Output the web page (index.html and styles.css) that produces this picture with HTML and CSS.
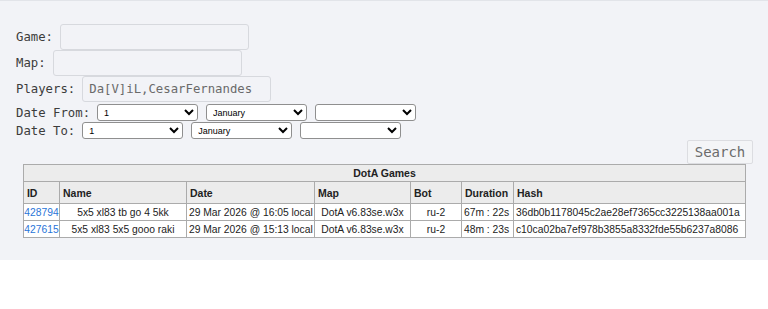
FILE: index.html
```html
<!DOCTYPE html>
<html lang="en">
<head>
  <meta charset="UTF-8">
  <meta name="viewport" content="width=device-width, initial-scale=1.0">
  <title>DotA Games</title>
  <link rel="stylesheet" href="styles.css">
</head>
<body>
  <div class="panel">
    <form class="search-form">
      <div class="field"><label for="game">Game:</label><input type="text" id="game" /></div>
      <div class="field"><label for="map">Map:</label><input type="text" id="map" /></div>
      <div class="field"><label for="players">Players:</label><input type="text" id="players" value="Da[V]iL,CesarFernandes" /></div>
      <div class="field date-row first">
        <label>Date From:</label>
        <select><option>1</option></select>
        <select><option>January</option></select>
        <select><option></option></select>
      </div>
      <div class="field date-row">
        <label>Date To:</label>
        <select><option>1</option></select>
        <select><option>January</option></select>
        <select><option></option></select>
      </div>
      <div class="actions"><button type="button">Search</button></div>
    </form>

    <table class="games">
      <colgroup>
        <col class="c-id"><col class="c-name"><col class="c-date"><col class="c-map"><col class="c-bot"><col class="c-dur"><col class="c-hash">
      </colgroup>
      <tr><th colspan="7" class="caption">DotA Games</th></tr>
      <tr class="head">
        <th>ID</th>
        <th>Name</th>
        <th>Date</th>
        <th>Map</th>
        <th>Bot</th>
        <th>Duration</th>
        <th>Hash</th>
      </tr>
      <tr>
        <td class="center"><a href="#">428794</a></td>
        <td class="center">5x5 xl83 tb go 4 5kk</td>
        <td>29 Mar 2026 @ 16:05 local</td>
        <td class="center">DotA v6.83se.w3x</td>
        <td class="center">ru-2</td>
        <td>67m : 22s</td>
        <td>36db0b1178045c2ae28ef7365cc3225138aa001a</td>
      </tr>
      <tr>
        <td class="center"><a href="#">427615</a></td>
        <td class="center">5x5 xl83 5x5 gooo raki</td>
        <td>29 Mar 2026 @ 15:13 local</td>
        <td class="center">DotA v6.83se.w3x</td>
        <td class="center">ru-2</td>
        <td>48m : 23s</td>
        <td>c10ca02ba7ef978b3855a8332fde55b6237a8086</td>
      </tr>
    </table>
  </div>
</body>
</html>
```

FILE: styles.css
```css
body { margin: 0; background: #fff; }
.panel { background: #f2f3f7; border-top: 1px solid #e2e4e9; padding: 23px 15px 22px 16px; font-family: "DejaVu Sans Mono", monospace; font-size: 12.3px; color: #3c3c3c; }
.field { display: flex; align-items: center; gap: 7px; }
.field input { box-sizing: border-box; width: 189px; height: 26px; margin: 0; padding: 0 6px; border: 1px solid #d7d9de; border-radius: 3px; background: #f2f3f7; font-family: "DejaVu Sans Mono", monospace; font-size: 12.3px; color: #6a6a6a; }
.date-row { gap: 8px; margin-top: 1px; }
.date-row.first { margin-top: 2px; }
.date-row label { margin-right: -1px; }
.date-row select { box-sizing: border-box; width: 101px; height: 17px; margin: 0; padding: 0 2px; font-family: "Liberation Sans", Arial, sans-serif; font-size: 9px; background: #fff; border: 1px solid #8f8f8f; border-radius: 3px; color: #000; }
.actions { display: flex; justify-content: flex-end; margin-top: 1px; }
.actions button { box-sizing: border-box; width: 66px; height: 24px; padding: 0; font-family: "DejaVu Sans Mono", monospace; font-size: 14px; color: #6b6b6b; background: #f4f5f7; border: 1px solid #dcdde1; border-radius: 2px; }
.games { width: 722px; margin: 0 auto; table-layout: fixed; border-collapse: collapse; font-family: "Liberation Sans", Arial, sans-serif; font-size: 10.3px; color: #222; }
.games th, .games td { border: 1px solid #ababab; }
.games th { background: #ececec; text-align: left; font-weight: bold; padding: 0 3px; font-size: 10.5px; }
.games th.caption { text-align: center; height: 16px; padding: 0; }
.games tr.head th { height: 21px; }
.games td { background: #fff; padding: 0 0 0 2px; height: 16px; white-space: nowrap; }
.games td.center { text-align: center; padding: 0; }
.games a { color: #2a74d8; text-decoration: none; }
.c-id { width: 36px; }
.c-name { width: 127px; }
.c-date { width: 128px; }
.c-map { width: 96px; }
.c-bot { width: 51px; }
.c-dur { width: 52px; }
.c-hash { width: 232px; }
```
